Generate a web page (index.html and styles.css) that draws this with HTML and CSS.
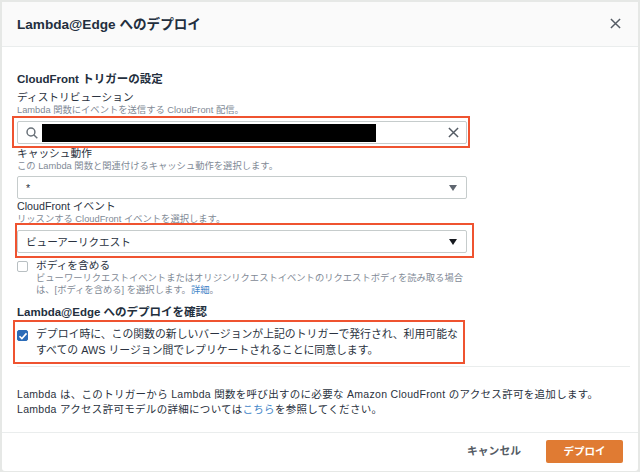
FILE: index.html
```html
<!DOCTYPE html>
<html lang="ja">
<head>
<meta charset="utf-8">
<title>Lambda@Edge へのデプロイ</title>
<link rel="stylesheet" href="styles.css">
</head>
<body>
<div class="modal">
  <header class="head">
    <h1>Lambda@Edge へのデプロイ</h1>
    <svg class="close" width="11" height="11" viewBox="0 0 12 12"><path d="M1 1l10 10M11 1L1 11"/></svg>
  </header>
  <main class="body">
    <h2 class="first">CloudFront トリガーの設定</h2>
    <div class="label">ディストリビューション</div>
    <div class="hint">Lambda 関数にイベントを送信する CloudFront 配信。</div>
    <div class="field search">
      <svg class="glass" width="12" height="12" viewBox="0 0 14 14"><circle cx="5.8" cy="5.8" r="4.6"/><path d="M9 9l4.2 4.2"/></svg>
      <span class="redact"></span>
      <svg class="clear" width="11" height="11" viewBox="0 0 12 12"><path d="M1 1l10 10M11 1L1 11"/></svg>
    </div>
    <div class="label l2">キャッシュ動作</div>
    <div class="hint">この Lambda 関数と関連付けるキャッシュ動作を選択します。</div>
    <div class="field select"><span>*</span><i class="caret grey"></i></div>
    <div class="label l3">CloudFront イベント</div>
    <div class="hint">リッスンする CloudFront イベントを選択します。</div>
    <div class="field select"><span>ビューアーリクエスト</span><i class="caret dark"></i></div>
    <div class="check-row c1">
      <span class="box"></span>
      <div>
        <div class="check-label">ボディを含める</div>
        <div class="hint tight">ビューワーリクエストイベントまたはオリジンリクエストイベントのリクエストボディを読み取る場合</div>
        <div class="hint tight">は、[ボディを含める] を選択します。<a>詳細</a>。</div>
      </div>
    </div>
    <h2 class="second">Lambda@Edge へのデプロイを確認</h2>
    <div class="check-row c2">
      <span class="box on"><svg width="10" height="10" viewBox="0 0 10 10"><path d="M1.5 5.2l2.4 2.4 4.6-5.2"/></svg></span>
      <div class="agree">デプロイ時に、この関数の新しいバージョンが上記のトリガーで発行され、利用可能な<br>すべての AWS リージョン間でレプリケートされることに同意します。</div>
    </div>
    <hr class="rule">
    <p class="note">Lambda は、このトリガーから Lambda 関数を呼び出すのに必要な Amazon CloudFront のアクセス許可を追加します。<br>Lambda アクセス許可モデルの詳細については<a>こちら</a>を参照してください。</p>
  </main>
  <footer class="foot">
    <span class="cancel">キャンセル</span>
    <span class="deploy">デプロイ</span>
  </footer>
</div>
<div class="mark m1"></div>
<div class="mark m2"></div>
<div class="mark m3"></div>
</body>
</html>
```
FILE: styles.css
```css
* { box-sizing: border-box; }
html, body { margin: 0; height: 472px; overflow: hidden; }
body {
  position: relative;
  background: #e6e8e6;
  padding: 2px 2px 1px 2px;
  font-family: "Liberation Sans", "Noto Sans CJK JP", sans-serif;
  color: #2a3240;
}
.modal {
  height: 469px;
  background: #fff;
  display: flex;
  flex-direction: column;
  border-radius: 0 0 3px 3px;
}
.head {
  height: 45px;
  flex: none;
  background: #fafafa;
  border-bottom: 1px solid #eaeded;
  display: flex;
  align-items: center;
  justify-content: space-between;
  padding: 0 17px 2px 15px;
}
h1 { margin: 0; font-size: 13.6px; font-weight: 700; color: #232f3e; }
.close { stroke: #545b64; stroke-width: 1.6; fill: none; }
.body { flex: 1; padding: 0 8px 0 15px; }
h2 { margin: 0; font-size: 11.5px; line-height: 16px; font-weight: 700; color: #232f3e; }
h2.first { margin-top: 24px; }
h2.second { margin-top: 8px; }
.label { font-size: 10.7px; line-height: 14px; margin-top: 3px; color: #2a3240; }
.l2 { margin-top: 2px; }
.l3 { margin-top: 0; }
.hint { font-size: 9.3px; line-height: 13px; color: #7f8a96; }
.hint a, .note a { color: #3f85c8; }
.field {
  width: 450px;
  height: 23px;
  margin-top: 3px;
  border: 1px solid #c6cccc;
  border-radius: 2px;
  background: #fff;
  display: flex;
  align-items: center;
  font-size: 10.6px;
}
.search { margin-top: 4px; }
.select { justify-content: space-between; padding: 0 9px 0 8px; }
.l3 + .hint + .select { margin-top: 4px; }
.glass { margin-left: 8px; stroke: #687078; stroke-width: 1.7; fill: none; }
.redact { width: 334px; height: 18px; margin-left: 4px; background: #000; }
.clear { margin-left: auto; margin-right: 7px; stroke: #545b64; stroke-width: 1.6; fill: none; }
.caret { width: 0; height: 0; border-left: 4px solid transparent; border-right: 4px solid transparent; border-top: 6px solid #5f6670; }
.caret.dark { border-top-color: #16191f; }
.check-row { display: flex; }
.c1 { margin-top: 6px; }
.c2 { margin-top: 6px; }
.box { flex: none; width: 11px; height: 11px; margin-top: 2px; margin-right: 8px; border: 1px solid #b8bfc2; border-radius: 2px; background: #fff; display: flex; align-items: center; justify-content: center; }
.box.on { background: #2b6cb8; border-color: #2b6cb8; margin-top: 4px; }
.box svg { stroke: #fff; stroke-width: 1.6; fill: none; flex: none; }
.check-label { font-size: 10.7px; line-height: 13px; }
.tight { line-height: 12px; }
.agree { font-size: 10.85px; line-height: 16px; color: #2a3240; }
.rule { margin: 8px 0 0 0; border: 0; border-top: 1px solid #eaeded; width: 613px; }
.note { margin: 20px 0 0; font-size: 10.5px; line-height: 15px; letter-spacing: .3px; color: #2a3240; }
.foot {
  height: 39px;
  flex: none;
  border-top: 1px solid #eaeded;
  display: flex;
  align-items: flex-start;
  justify-content: flex-end;
  padding: 7px 15px 0 0;
}
.cancel { font-size: 10.8px; font-weight: 700; line-height: 23px; color: #545b64; margin-right: 25px; }
.deploy { width: 77px; height: 23px; background: #e07b33; border-radius: 2px; color: #fff; font-size: 10.5px; font-weight: 700; line-height: 23px; text-align: center; }
.mark { position: absolute; border: 2px solid #ef5330; }
.m1 { left: 12px; top: 116px; width: 458px; height: 32px; }
.m2 { left: 15px; top: 223px; width: 459px; height: 35px; }
.m3 { left: 13px; top: 320px; width: 452px; height: 44px; }
```
